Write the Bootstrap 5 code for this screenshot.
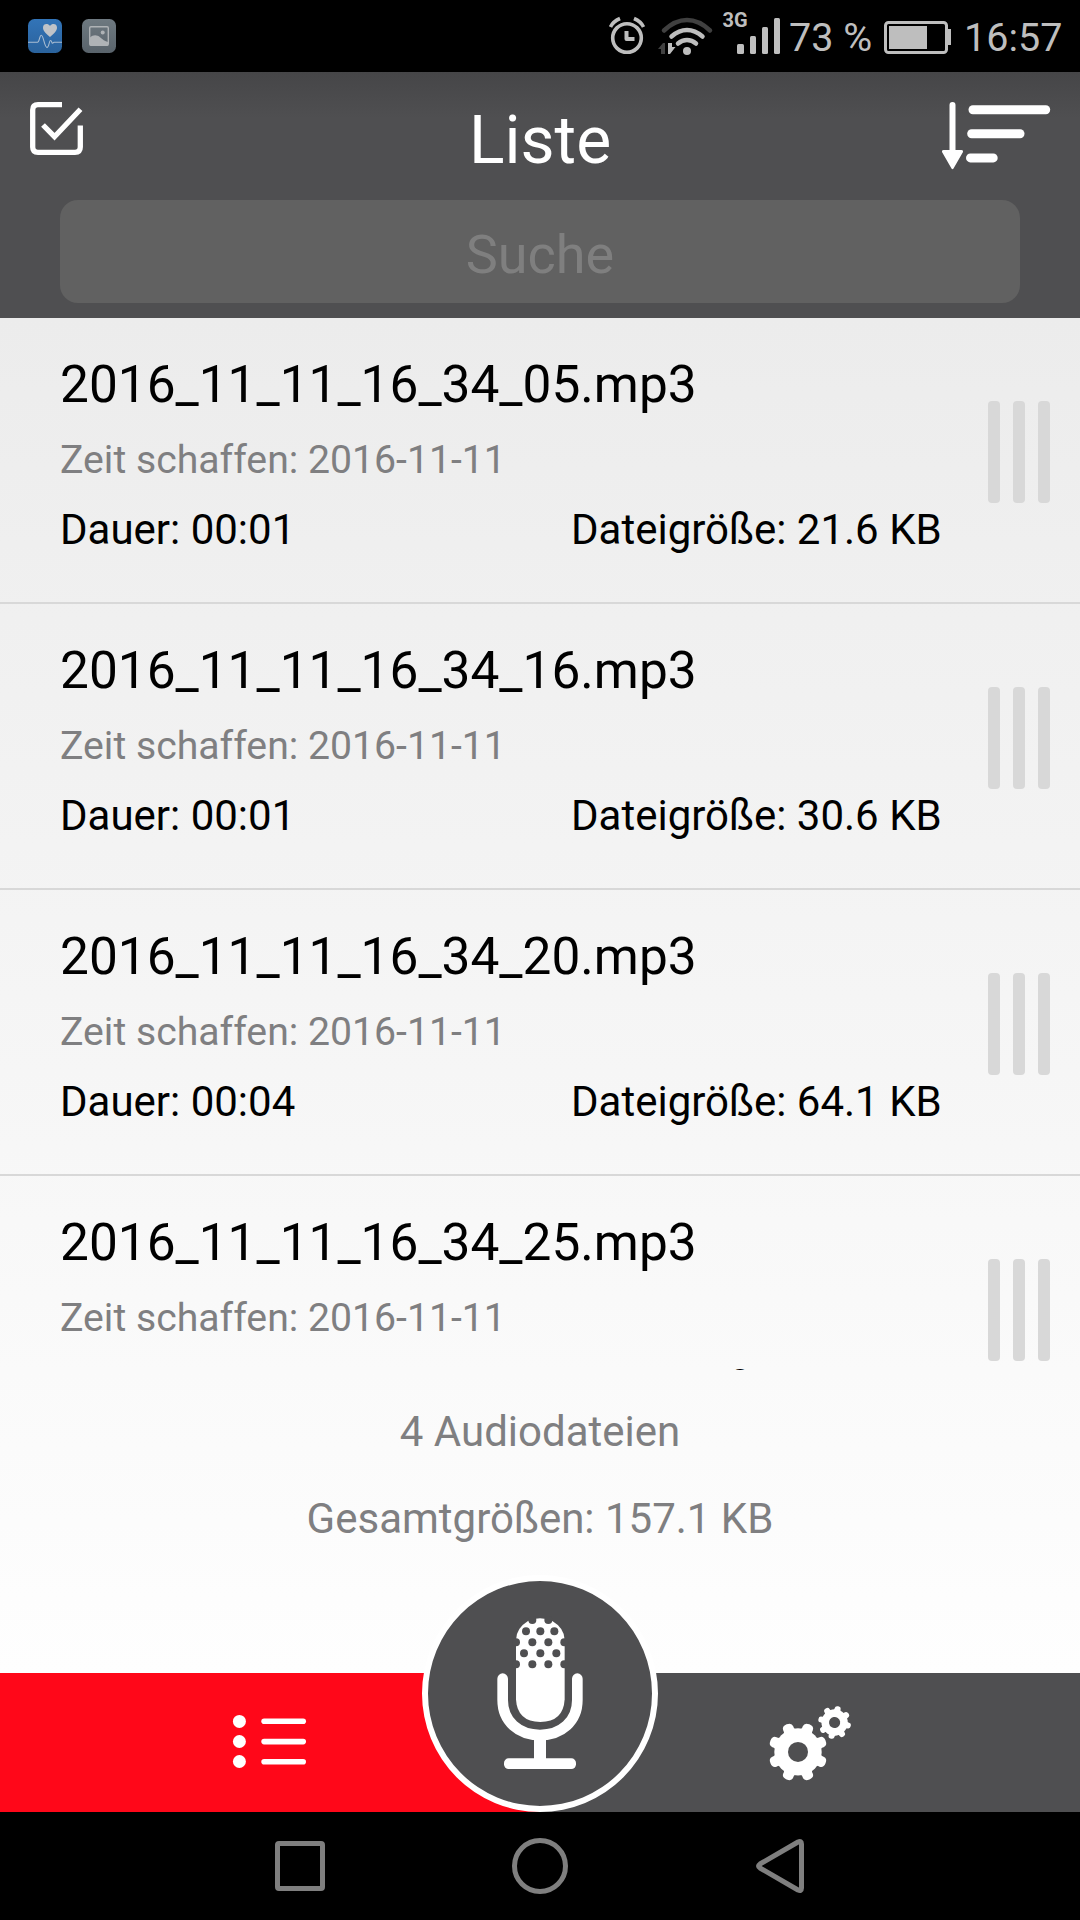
<!DOCTYPE html>
<html lang="de">
<head>
<meta charset="utf-8">
<meta name="viewport" content="width=device-width, initial-scale=1">
<title>Liste</title>
<link href="https://cdn.jsdelivr.net/npm/bootstrap@5.3.0/dist/css/bootstrap.min.css" rel="stylesheet">
<style>
  html, body { height: 100%; }
  body { font-family: Roboto, "Liberation Sans", sans-serif; color: #000; overflow: hidden; background: #000; }
  svg { display: block; flex: none; overflow: visible; }
  .phone { width: 1080px; height: 1920px; }
  .statusbar { height: 72px; padding: 0 19px 0 28px; color: #bebebe; font-size: 39.5px; line-height: 75px; white-space: pre; }
  .statusbar .sys { height: 72px; }
  .statusicons { gap: 20px; }
  .pct { width: 94px; margin-left: 8px; }
  .clock { width: 97px; margin-left: 13px; }
  .apphead { height: 246px; background: linear-gradient(#464648, #4f4f51 46px); }
  .titlerow { height: 128px; padding: 30px 30px 0; }
  .titlerow h1 { font-size: 66px; line-height: 77px; font-weight: 400; color: #fff; margin: 0; }
  .sidebox { width: 108px; }
  .searchbox { height: 103px; margin: 0 60px; border-radius: 18px; background: #616161; border: 0; color: #7f7f7f; font-size: 54px; text-align: center; padding: 5px 0 0; width: 960px; display: block; }
  .searchbox::placeholder { color: #7f7f7f; opacity: 1; }
  .searchbox:focus { outline: none; }
  .content { height: 1355px; background: linear-gradient(#ececec, #fefefe); }
  .files { height: 1052px; overflow: hidden; }
  .fileitem { height: 286px; border-bottom: 2px solid #d8d8d8; padding: 29px 30px 0 60px; white-space: nowrap; }
  .fname { font-size: 51.4px; line-height: 76px; }
  .fdate { font-size: 39.2px; line-height: 75px; color: #7f7f81; }
  .fmeta { font-size: 42px; line-height: 64px; }
  .fdur { width: 511px; }
  .grip { width: 62px; height: 102px; margin-top: 54px; }
  .grip span { width: 12px; border-radius: 4px; background: #d8d8d8; }
  .totals { padding-top: 18px; font-size: 42px; line-height: 87px; color: #7f7f81; }
  .tabs { height: 139px; position: relative; }
  .tab-list { background: #ff0719; padding: 0 0 2px 233px; }
  .tab-set { background: #4f4f51; padding-left: 229px; }
  .recbtn { position: absolute; left: 422px; top: -98px; width: 236px; height: 237px; border-radius: 50%; border: 6px solid #fff; background: #4f4f51; padding: 0; }
  .navkeys { height: 108px; padding: 0 275px; }
</style>
</head>
<body>
<div class="phone d-flex flex-column">

  <div class="statusbar bg-black d-flex justify-content-between">
    <div class="statusicons d-flex align-items-center">
      <svg width="34" height="34" viewBox="0 0 34 34">
        <defs><linearGradient id="hg" x2="0" y2="1"><stop stop-color="#3274b8"/><stop offset="1" stop-color="#2a629c"/></linearGradient></defs>
        <rect width="34" height="34" rx="6.5" fill="url(#hg)"/>
        <path d="M22 18C16 13 15 11 15 8.500C15 4.500 20 4 22 7C24 4 29 4.500 29 8.500C29 11 28 13 22 18Z" fill="#bfc3c8"/>
        <path d="M0 23.300H9.500C11.500 23.300 11.500 16.300 13.300 16.300C15.500 16.300 16.500 28.500 19 28.500C21.200 28.500 21 21.500 22.500 21.500C24 21.500 23.500 24.300 24.600 24.300L26 23.300H34" fill="none" stroke="#a9bdd2" stroke-width="1.100"/>
      </svg>
      <svg width="34" height="34" viewBox="0 0 34 34">
        <defs><linearGradient id="pg" x2="0" y2="1"><stop stop-color="#6e7980"/><stop offset="1" stop-color="#59636b"/></linearGradient></defs>
        <rect width="34" height="34" rx="6.500" fill="url(#pg)"/>
        <rect x="7.700" y="7.700" width="18.600" height="18.600" rx="1.200" fill="none" stroke="#afb3b6" stroke-width="1.400"/>
        <circle cx="20.700" cy="13.500" r="2" fill="#afb3b6"/>
        <path d="M8 18.500C11 15.500 15 15.500 18 18.200C20.500 20.500 23 22 26 23V26.500H8Z" fill="#afb3b6"/>
      </svg>
    </div>
    <div class="sys d-flex">
      <svg width="181" height="72" viewBox="600 0 181 72" fill="none" stroke="#bebebe">
        <circle cx="627" cy="38" r="14.300" stroke-width="3.600"/>
        <path d="M626.500 31V39H634.500" stroke-width="4" stroke-linejoin="round"/>
        <path d="M610.500 27Q613 21.500 620 18.500M643.500 27Q641 21.500 634 18.500" stroke-width="3.600"/>
        <path d="M664 30.500Q675 20 687 20T710 30.500" stroke="#404040" stroke-width="4.500" stroke-linecap="round"/>
        <path d="M671.500 36.500Q679 30 687 30T702.500 36.500M678 43.500Q682 40 687 40T696 43.500" stroke-width="4.500" stroke-linecap="round"/>
        <circle cx="687" cy="51" r="4" fill="#bebebe" stroke="none"/>
        <path d="M658 49L663 43H665V54H661V49Z" fill="#404040" stroke="none"/>
        <path d="M668 43H672V47H675.500L670 54H668Z" fill="#bebebe" stroke="none"/>
        <g fill="#bebebe" stroke="none">
          <rect x="737" y="44" width="7" height="10" rx="1.500"/><rect x="750" y="36" width="6" height="18" rx="1.500"/><rect x="762" y="27" width="6" height="27" rx="1.500"/><rect x="774" y="18" width="6" height="36" rx="1.500"/>
          <text x="722.500" y="26.800" font-size="20" font-weight="700">3G</text>
        </g>
      </svg>
      <span class="pct">73 %</span>
      <svg width="68" height="72" viewBox="883 0 68 72">
        <rect x="885.500" y="22.500" width="61" height="30" rx="3" fill="none" stroke="#bebebe" stroke-width="3"/>
        <rect x="889" y="26" width="38" height="23" fill="#bebebe"/>
        <path d="M948 29H951V45H948Z" fill="#bebebe"/>
      </svg>
      <span class="clock">16:57</span>
    </div>
  </div>

  <header class="apphead">
    <div class="titlerow d-flex justify-content-between">
      <div class="sidebox"><svg width="53" height="53" viewBox="30 102 53 53" fill="none" stroke="#fff" stroke-width="5.300">
        <path d="M62 104.700H38Q32.700 104.700 32.700 110V147Q32.700 152.300 38 152.300H75Q80.300 152.300 80.300 147V125.500"/>
        <path d="M43 125L54.500 136.700L80.500 109.200"/></svg></div>
      <h1>Liste</h1>
      <div class="sidebox d-flex justify-content-end"><svg width="108" height="67" viewBox="942 102 108 67" fill="#fff">
        <path d="M949.500 105a3 3 0 0 1 6 0V150H961.500Q963.500 150 963 152L953.500 168.500Q952.500 170 951.500 168.500L942 152Q941.500 150 943.500 150H949.500Z"/>
        <rect x="968.500" y="105.300" width="81.700" height="8.900" rx="4.400"/><rect x="967.200" y="129.300" width="57.300" height="8.900" rx="4.400"/><rect x="966" y="153.500" width="31.700" height="8.900" rx="4.400"/></svg></div>
    </div>
    <input class="searchbox" type="text" placeholder="Suche" aria-label="Suche">
  </header>

  <main class="content">
    <div class="files">
      <div class="fileitem d-flex justify-content-between">
        <div><div class="fname">2016_11_11_16_34_05.mp3</div><div class="fdate">Zeit schaffen: 2016-11-11</div>
          <div class="fmeta d-flex"><span class="fdur">Dauer: 00:01</span><span>Dateigröße: 21.6 KB</span></div></div>
        <div class="grip d-flex justify-content-between"><span></span><span></span><span></span></div>
      </div>
      <div class="fileitem d-flex justify-content-between">
        <div><div class="fname">2016_11_11_16_34_16.mp3</div><div class="fdate">Zeit schaffen: 2016-11-11</div>
          <div class="fmeta d-flex"><span class="fdur">Dauer: 00:01</span><span>Dateigröße: 30.6 KB</span></div></div>
        <div class="grip d-flex justify-content-between"><span></span><span></span><span></span></div>
      </div>
      <div class="fileitem d-flex justify-content-between">
        <div><div class="fname">2016_11_11_16_34_20.mp3</div><div class="fdate">Zeit schaffen: 2016-11-11</div>
          <div class="fmeta d-flex"><span class="fdur">Dauer: 00:04</span><span>Dateigröße: 64.1 KB</span></div></div>
        <div class="grip d-flex justify-content-between"><span></span><span></span><span></span></div>
      </div>
      <div class="fileitem d-flex justify-content-between">
        <div><div class="fname">2016_11_11_16_34_25.mp3</div><div class="fdate">Zeit schaffen: 2016-11-11</div>
          <div class="fmeta d-flex"><span class="fdur">Dauer: 00:03</span><span>Dateigröße: 40.8 KB</span></div></div>
        <div class="grip d-flex justify-content-between"><span></span><span></span><span></span></div>
      </div>
    </div>
    <div class="totals text-center">
      <div>4 Audiodateien</div>
      <div>Gesamtgrößen: 157.1 KB</div>
    </div>
  </main>

  <nav class="tabs d-flex">
    <div class="tab-list w-50 d-flex align-items-center">
      <svg width="73" height="53" viewBox="233 1715 73 53" fill="#fff">
        <circle cx="239.400" cy="1721.400" r="6.500"/><circle cx="239.400" cy="1741.500" r="6.500"/><circle cx="239.400" cy="1761.500" r="6.500"/>
        <rect x="261.300" y="1718.500" width="44.700" height="5.600" rx="2.800"/><rect x="261.300" y="1738.800" width="44.700" height="5.600" rx="2.800"/><rect x="261.300" y="1758.900" width="44.700" height="5.600" rx="2.800"/>
      </svg>
    </div>
    <div class="tab-set w-50 d-flex align-items-center">
      <svg width="82" height="76" viewBox="769 1704.500 82 76">
        <defs><g id="gear" fill="#fff"><circle r="23.700"/>
          <g id="t4"><path id="tooth" d="M-7.500 -20Q-4.500 -22 -5 -25.500Q-5 -29.800 0 -29.800T5 -25.500Q4.500 -22 7.500 -20Z" transform="rotate(22.500) scale(1.080 1)"/>
          <use href="#tooth" transform="rotate(45)"/><use href="#tooth" transform="rotate(90)"/><use href="#tooth" transform="rotate(135)"/></g>
          <use href="#t4" transform="rotate(180)"/><circle r="10" fill="#4f4f51"/></g></defs>
        <use href="#gear" transform="translate(798 1751.400)"/>
        <use href="#gear" transform="translate(834.600 1722) rotate(-10) scale(.555)"/>
      </svg>
    </div>
    <button class="recbtn d-flex align-items-center justify-content-center" type="button" aria-label="Aufnahme">
      <svg width="86" height="152" viewBox="291 174 258 456">
        <path d="M348 240Q348 205 384 183Q400 175 420 175T457 183Q494 205 494 240V418Q490 486 421 486T348 418Z" fill="#fff"/>
        <g fill="#4f4f51"><circle cx="397" cy="180" r="12"/><circle cx="445" cy="180" r="12"/>
          <circle cx="378" cy="214" r="12"/><circle cx="421" cy="214" r="12"/><circle cx="463" cy="214" r="12"/>
          <circle cx="348" cy="247" r="12"/><circle cx="397" cy="247" r="12"/><circle cx="445" cy="247" r="12"/><circle cx="493" cy="247" r="12"/>
          <circle cx="372" cy="280" r="12"/><circle cx="421" cy="280" r="12"/><circle cx="469" cy="280" r="12"/>
          <circle cx="348" cy="313" r="12"/><circle cx="397" cy="313" r="12"/><circle cx="445" cy="313" r="12"/><circle cx="493" cy="313" r="12"/></g>
        <path d="M308 356V420C308 484 356 525 420 525S532 484 532 420V356" fill="none" stroke="#fff" stroke-width="32" stroke-linecap="round"/>
        <path d="M402 530H438V600H402Z" fill="#fff"/><rect x="312" y="595" width="216" height="32" rx="14" fill="#fff"/>
      </svg>
    </button>
  </nav>

  <div class="navkeys bg-black d-flex align-items-center justify-content-between">
    <svg width="529" height="56" viewBox="275 1838 529 56" fill="none" stroke="#7f7f7f" stroke-width="5" stroke-linejoin="round">
      <rect x="277.500" y="1843.500" width="45" height="45" rx="1.500"/>
      <circle cx="540" cy="1866" r="25.500"/>
      <path d="M758.500 1866Q758.500 1865 760 1864L798 1842Q801.500 1840.500 801.500 1844V1888Q801.500 1891.500 798 1890L760 1868Q758.500 1867 758.500 1866Z"/>
    </svg>
  </div>
</div>
<script src="https://cdn.jsdelivr.net/npm/bootstrap@5.3.0/dist/js/bootstrap.bundle.min.js"></script>
</body>
</html>
